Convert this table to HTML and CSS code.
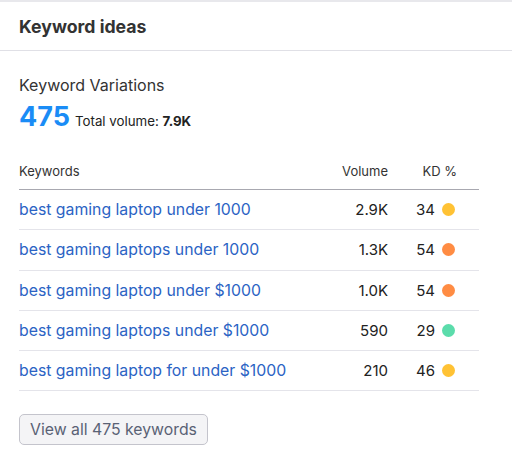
FILE: index.html
```html
<!DOCTYPE html>
<html>
<head>
<meta charset="utf-8">
<link rel="stylesheet" href="styles.css">
</head>
<body>
<div class="card">
  <div class="card-header">Keyword ideas</div>
  <div class="card-body">
    <div class="variations-title">Keyword Variations</div>
    <div class="summary">
      <span class="big-num">475</span>
      <span class="total">Total volume: <b>7.9K</b></span>
    </div>
    <div class="table">
      <div class="row head">
        <div class="c-kw">Keywords</div>
        <div class="c-vol">Volume</div>
        <div class="c-kd">KD %</div>
      </div>
      <div class="row">
        <div class="c-kw"><a class="kw">best gaming laptop under 1000</a></div>
        <div class="c-vol">2.9K</div>
        <div class="c-kd">34 <span class="dot yellow"></span></div>
      </div>
      <div class="row">
        <div class="c-kw"><a class="kw">best gaming laptops under 1000</a></div>
        <div class="c-vol">1.3K</div>
        <div class="c-kd">54 <span class="dot orange"></span></div>
      </div>
      <div class="row">
        <div class="c-kw"><a class="kw">best gaming laptop under $1000</a></div>
        <div class="c-vol">1.0K</div>
        <div class="c-kd">54 <span class="dot orange"></span></div>
      </div>
      <div class="row">
        <div class="c-kw"><a class="kw">best gaming laptops under $1000</a></div>
        <div class="c-vol">590</div>
        <div class="c-kd">29 <span class="dot green"></span></div>
      </div>
      <div class="row">
        <div class="c-kw"><a class="kw">best gaming laptop for under $1000</a></div>
        <div class="c-vol">210</div>
        <div class="c-kd">46 <span class="dot yellow"></span></div>
      </div>
    </div>
    <button class="view-all">View all 475 keywords</button>
  </div>
</div>
</body>
</html>
```
FILE: styles.css
```css
* { box-sizing: border-box; }
body {
  margin: 0;
  background: #fff;
  font-family: Inter, "Noto Sans", sans-serif;
  color: #333;
}
.card {
  border-top: 2px solid #e8e8ec;
  width: 512px;
}
.card-header {
  height: 49px;
  padding: 0 19px;
  display: flex;
  align-items: center;
  font-size: 17.7px;
  font-weight: 700;
  color: #333;
  border-bottom: 1px solid #e0e0e6;
}
.card-body {
  padding: 24px 33px 0 19px;
}
.variations-title {
  font-size: 16px;
  line-height: 20px;
  color: #333;
}
.summary {
  display: flex;
  align-items: baseline;
  gap: 5px;
  margin-top: 5px;
}
.big-num {
  font-size: 27px;
  font-weight: 700;
  color: #1a8cf6;
  line-height: 34px;
}
.total {
  font-size: 13.3px;
  color: #222;
}
.total b { font-weight: 700; }
.table {
  margin-top: 20px;
}
.row {
  display: flex;
  align-items: center;
  height: 40.3px;
  border-bottom: 1px solid #e4e4ea;
  font-size: 15px;
  color: #222;
}
.row.head {
  height: 36px;
  padding-bottom: 1px;
  font-size: 13px;
  color: #333;
  border-bottom: 1px solid #a8a8b0;
}
.c-kw { flex: 1; }
.c-vol { text-align: right; }
.c-kd {
  width: 91px;
  display: flex;
  justify-content: flex-end;
  align-items: center;
  gap: 7px;
  padding-right: 24px;
}
.row.head .c-kd { padding-right: 22px; }
.kw {
  color: #2b63c4;
  font-size: 15.8px;
  text-decoration: none;
}
.dot {
  width: 13px;
  height: 13px;
  border-radius: 50%;
  display: inline-block;
}
.yellow { background: #ffc234; }
.orange { background: #ff8c43; }
.green { background: #5bdcab; }
.view-all {
  margin-top: 23px;
  height: 31px;
  padding: 0 10px;
  font-family: Inter, "Noto Sans", sans-serif;
  font-size: 15.8px;
  color: #5a6275;
  background: #f4f4f6;
  border: 1px solid #c4c4cc;
  border-radius: 5px;
}
```
